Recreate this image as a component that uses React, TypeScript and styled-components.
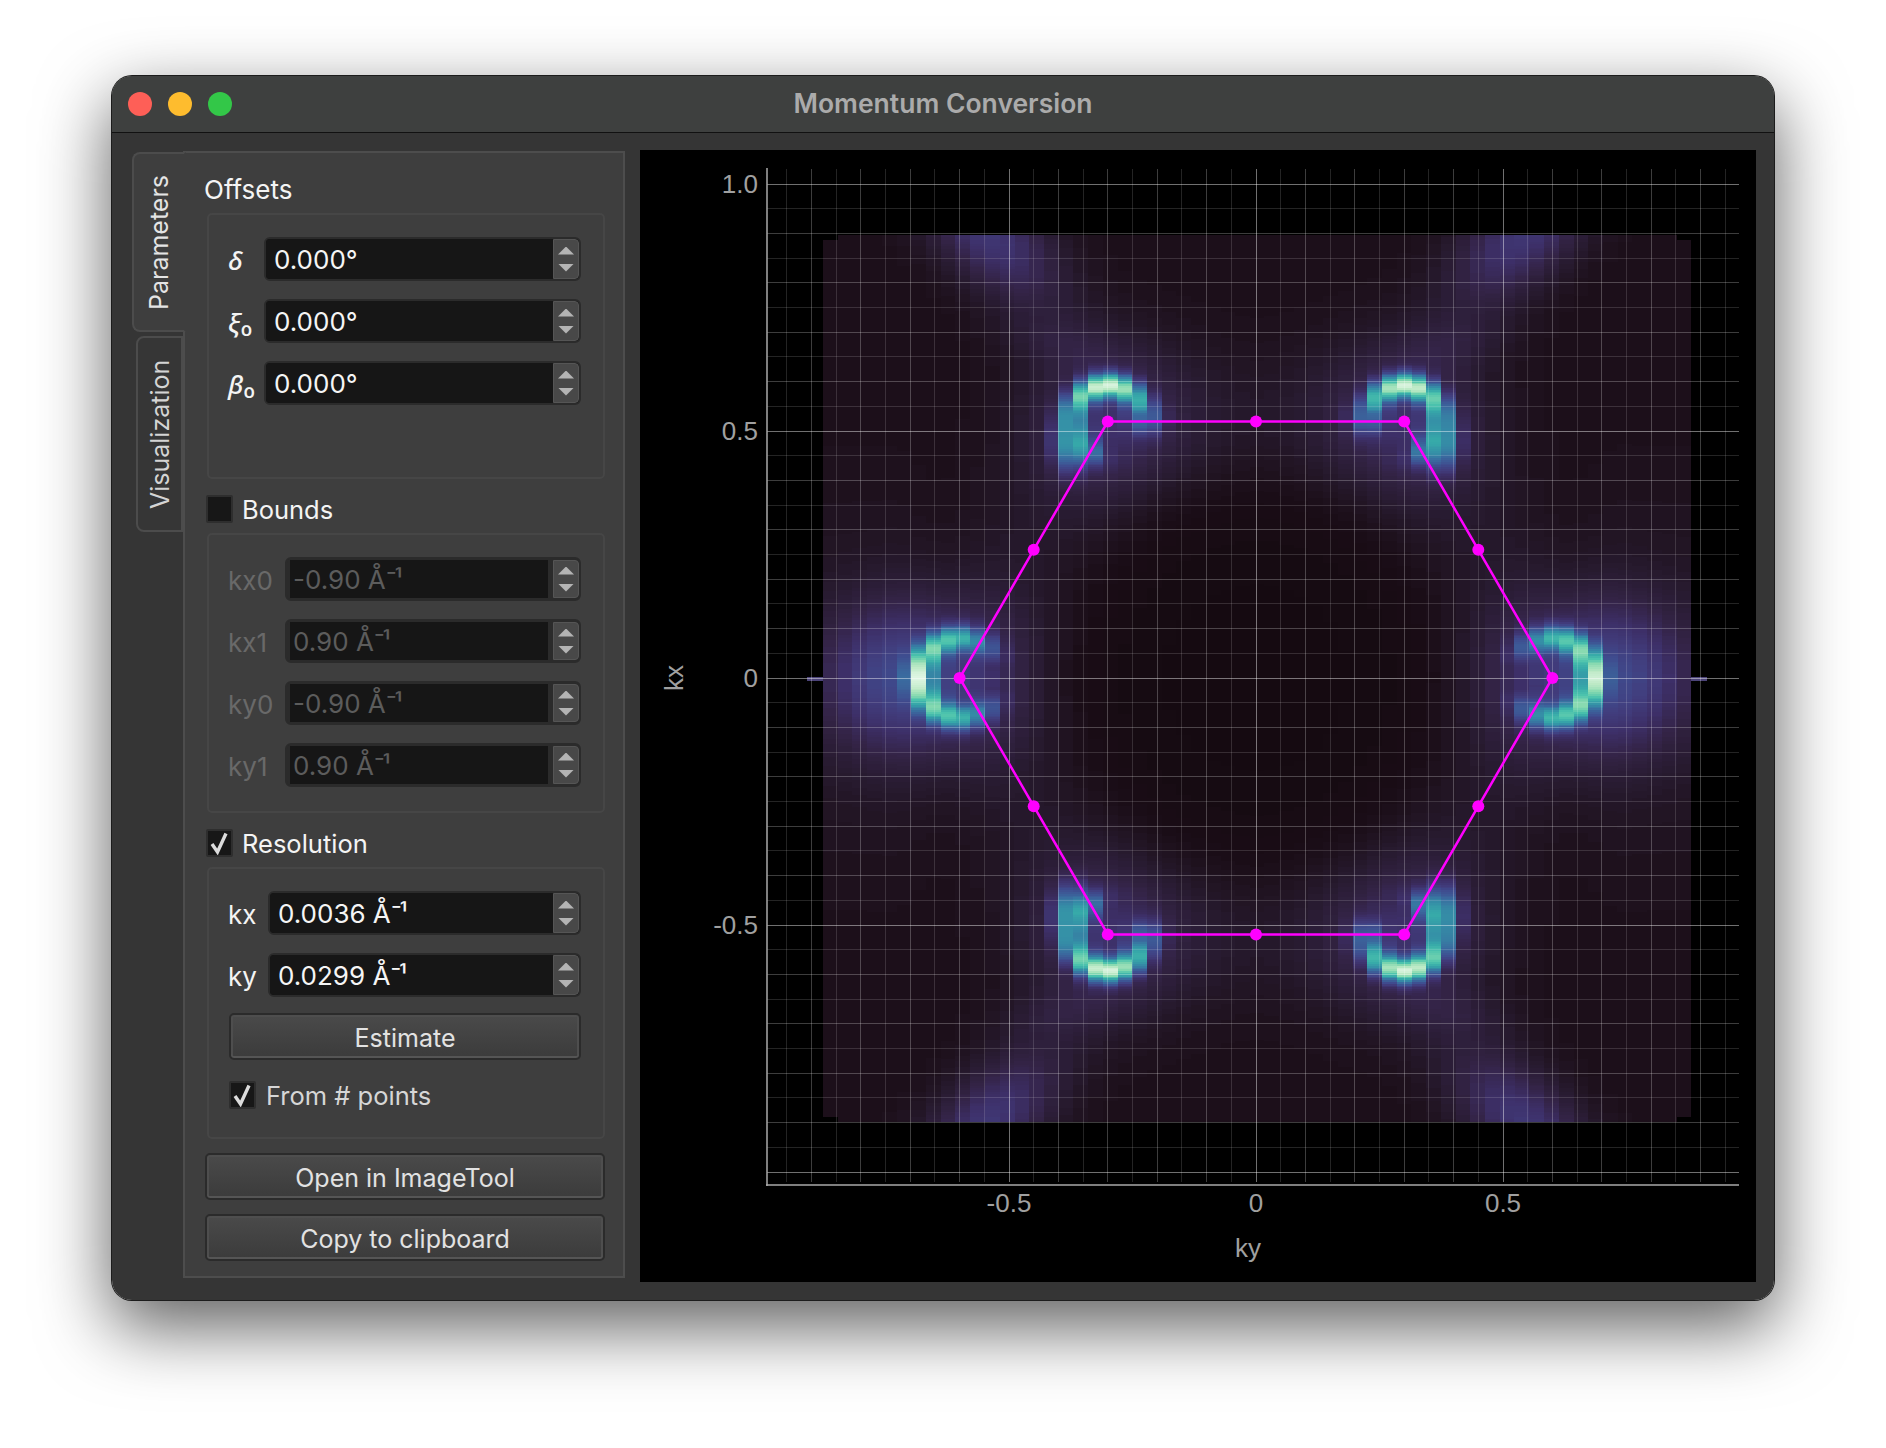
import { useMemo } from 'react';
import styled, { createGlobalStyle } from 'styled-components';

const PLOT_X = 640;
const PLOT_Y = 150;
const CX = 1256 - PLOT_X;
const CY = 678 - PLOT_Y;
const UNIT = 494;

const toX = (ky: number) => CX + ky * UNIT;
const toY = (kx: number) => CY - kx * UNIT;

const STOPS: [number, number[]][] = [
  [0, [11, 4, 5]],
  [0.04, [21, 10, 17]],
  [0.06, [26, 13, 22]],
  [0.1, [39, 26, 46]],
  [0.15, [52, 36, 72]],
  [0.2, [61, 47, 104]],
  [0.25, [65, 61, 125]],
  [0.3, [63, 75, 142]],
  [0.4, [58, 106, 159]],
  [0.5, [53, 138, 166]],
  [0.6, [54, 168, 169]],
  [0.7, [76, 195, 173]],
  [0.8, [134, 217, 176]],
  [0.9, [188, 233, 197]],
  [1, [228, 247, 232]],
];

const colorAt = (t: number) => {
  const v = Math.min(1, Math.max(0, t));
  for (let i = 1; i < STOPS.length; i++) {
    if (v <= STOPS[i][0]) {
      const [a, ca] = STOPS[i - 1];
      const [b, cb] = STOPS[i];
      const f = (v - a) / (b - a);
      const c = ca.map((n, k) => Math.round(n + (cb[k] - n) * f));
      return `rgb(${c[0]},${c[1]},${c[2]})`;
    }
  }
  return 'rgb(228,247,232)';
};

const SIDE_TABLE = [
  [-180, 0.1], [-150, 0.25], [-125, 0.45], [-90, 0.66], [-65, 0.74], [-40, 0.82], [-20, 0.92], [0, 1],
  [20, 0.92], [40, 0.82], [65, 0.74], [90, 0.66], [125, 0.45], [150, 0.25], [180, 0.1],
];
const TOP_TABLE = [
  [-180, 0.28], [-140, 0.14], [-90, 0.2], [-47, 0.6], [0, 0.62], [30, 0.72], [56, 0.85], [77, 0.98],
  [100, 0.96], [130, 0.76], [158, 0.55], [180, 0.28],
];

const lookup = (table: number[][], deg: number) => {
  for (let i = 1; i < table.length; i++) {
    if (deg <= table[i][0]) {
      const f = (deg - table[i - 1][0]) / (table[i][0] - table[i - 1][0]);
      return table[i - 1][1] + (table[i][1] - table[i - 1][1]) * f;
    }
  }
  return table[table.length - 1][1];
};

const gauss = (d: number, s: number) => Math.exp(-(d * d) / (s * s));
const smooth = (v: number, a: number, b: number) => {
  const f = Math.min(1, Math.max(0, (v - a) / (b - a)));
  return f * f * (3 - 2 * f);
};

const intensity = (kyRaw: number, kxRaw: number) => {
  const ky = Math.abs(kyRaw);
  const kx = Math.abs(kxRaw);
  const rad = Math.hypot(ky, kx);
  let bg = 0.04 + 0.026 * smooth(rad, 0.1, 0.7);

  const d = Math.max(kx, ky * 0.866 + kx * 0.5) - 0.52;
  bg += 0.03 * gauss(d, 0.14);

  const sr = Math.hypot(ky - 0.6, kx);
  const tr = Math.hypot(ky - 0.3, kx - 0.52);
  bg += 0.13 * gauss(sr, 0.15) + 0.11 * gauss(tr, 0.15);

  // haze going out from the side pockets
  bg += 0.13 * gauss(kx, 0.14) * gauss(ky - 0.76, 0.12);
  bg += 0.03 * gauss(kx, 0.32) * smooth(ky, 0.6, 0.75);

  // soft bands running from the upper pockets to the top and bottom edges
  const c = 0.4 + (kx - 0.67) * 0.62;
  bg += (0.05 + 0.11 * smooth(kx, 0.72, 0.9)) * gauss(ky - c, 0.11) * smooth(kx, 0.58, 0.7);

  const sa = (Math.atan2(kx, ky - 0.6) * 180) / Math.PI;
  const ta = (Math.atan2(kx - 0.52, ky - 0.3) * 180) / Math.PI;
  const sw = gauss(sr - 0.08, 0.024);
  const tw = gauss(tr - 0.072, 0.023);
  let t = bg;
  t += Math.max(0, lookup(SIDE_TABLE, sa) - t) * sw;
  t += Math.max(0, lookup(TOP_TABLE, ta) - t) * tw;

  // the arc's ends hang down as short streaks
  t += Math.max(0, 0.56 - t) * gauss(ky - 0.375, 0.03) * gauss(kx - 0.475, 0.05);
  t += Math.max(0, 0.4 - t) * gauss(ky - 0.225, 0.03) * gauss(kx - 0.525, 0.03);
  return t;
};

const COL_W = 14.71;
const ROW_H = 1.8;
const IMG_X = 823 - PLOT_X;
const IMG_Y = 235 - PLOT_Y;
const COLS = 59;
const ROWS = 493;
const LEVELS = 180;

const buildHeatmap = () => {
  const paths: string[][] = Array.from({ length: LEVELS + 1 }, () => []);
  for (let i = 0; i < COLS; i++) {
    const x = IMG_X + i * COL_W;
    const w = COL_W + 0.3;
    const ky = (x + COL_W / 2 - CX) / UNIT;
    const edgeCol = i === 0 || i === COLS - 1;
    let start = edgeCol ? 3 : 0;
    const end = edgeCol ? ROWS - 3 : ROWS;
    let level = -1;
    for (let j = start; j <= end; j++) {
      const y = IMG_Y + j * ROW_H;
      const kx = (CY - (y + ROW_H / 2)) / UNIT;
      const next = j === end ? -2 : Math.round(Math.min(1, intensity(ky, kx)) * LEVELS);
      if (next !== level) {
        if (level >= 0) {
          paths[level].push(`M${x.toFixed(1)} ${(IMG_Y + start * ROW_H).toFixed(1)}h${w.toFixed(1)}V${y.toFixed(1)}H${x.toFixed(1)}z`);
        }
        level = next;
        start = j;
      }
    }
  }
  return paths
    .map((p, i) => ({ d: p.join(''), fill: colorAt(i / LEVELS) }))
    .filter((p) => p.d);
};

const HEX: [number, number][] = [
  [0.6, 0],
  [0.3, 0.519],
  [-0.3, 0.519],
  [-0.6, 0],
  [-0.3, -0.519],
  [0.3, -0.519],
];

const Global = createGlobalStyle`
  html, body {
    margin: 0;
    background: #fff;
  }
  * {
    box-sizing: border-box;
  }
`;

const Page = styled.div`
  width: 1886px;
  height: 1448px;
  padding: 76px 0 0 112px;
  overflow: hidden;
  background: #fff;
  font-family: Inter, 'Noto Sans', sans-serif;
`;
const Window = styled.div`
  width: 1662px;
  height: 1224px;
  border-radius: 20px;
  background: #353535;
  overflow: hidden;
`;
const WindowShadow = styled.div`
  width: 1662px;
  height: 1224px;
  border-radius: 20px;
  box-shadow: 0 0 0 1px #1c1c1c, 0 26px 70px 2px rgba(0, 0, 0, 0.62);
`;
const TitleBar = styled.div`
  position: relative;
  height: 57px;
  background: #3e403f;
  border-bottom: 1px solid #111;
  display: flex;
  align-items: center;
  justify-content: center;
`;
const Lights = styled.div`
  position: absolute;
  left: 16px;
  top: 16px;
  display: flex;
  gap: 16px;
`;
const Light = styled.span<{ $color: string }>`
  width: 24px;
  height: 24px;
  border-radius: 50%;
  background: ${({ $color }) => $color};
`;
const Title = styled.div`
  font-size: 26.5px;
  font-weight: 600;
  color: #ababab;
  margin-top: -2px;
`;
const Body = styled.div`
  display: flex;
  align-items: flex-start;
  padding: 17px 0 0 20px;
`;
const Tabs = styled.div`
  width: 54px;
  margin-top: 2px;
  margin-right: -3px;
  position: relative;
  z-index: 1;
  display: flex;
  flex-direction: column;
  gap: 4px;
`;
const Tab = styled.div<{ $active?: boolean }>`
  writing-mode: vertical-rl;
  transform: rotate(180deg);
  display: flex;
  align-items: center;
  justify-content: center;
  font-size: 25px;
  color: ${({ $active }) => ($active ? '#e4e4e4' : '#d4d4d4')};
  background: ${({ $active }) => ($active ? '#3e3e3e' : '#363636')};
  border: 2px solid #4c4c4c;
  width: ${({ $active }) => ($active ? '54px' : '47px')};
  height: ${({ $active }) => ($active ? '180px' : '196px')};
  margin-left: ${({ $active }) => ($active ? '0' : '4px')};
  border-left-color: ${({ $active }) => ($active ? '#3e3e3e' : '#4c4c4c')};
  border-radius: 0 8px 8px 0;
`;
const Panel = styled.div`
  width: 442px;
  height: 1127px;
  margin-top: 1px;
  margin-right: 15px;
  background: #3e3e3e;
  border: 2px solid #4d4d4d;
  padding: 0 18px 0 20px;
  display: flex;
  flex-direction: column;
`;
const SectionTitle = styled.div`
  height: 60px;
  padding-top: 22px;
  margin-left: -1px;
  font-size: 26px;
  line-height: 30px;
  color: #f4f4f4;
`;
const CheckRow = styled.div`
  height: 54px;
  padding: 6px 0 0 1px;
  display: flex;
  align-items: center;
  gap: 9px;
  font-size: 25.5px;
  color: #f4f4f4;
`;
const SubCheckRow = styled(CheckRow)`
  height: 28px;
  padding: 0;
  margin-top: 3px;
  gap: 10px;
  color: #d6d6d6;
`;
const Box = styled.span`
  width: 27px;
  height: 28px;
  flex: none;
  background: #171717;
  border: 2px solid #2e2e2e;
  border-radius: 2px;
  display: block;
`;
const Group = styled.div<{ $height: number }>`
  height: ${({ $height }) => $height}px;
  margin-left: 2px;
  border: 2px solid #464646;
  border-radius: 5px;
  padding: 22px 22px 0 20px;
  display: flex;
  flex-direction: column;
  gap: 18px;
`;
const Row = styled.div`
  display: flex;
  align-items: center;
`;
const RowLabel = styled.div<{ $width: number; $disabled?: boolean }>`
  width: ${({ $width }) => $width}px;
  flex: none;
  font-size: 26px;
  margin-left: -1px;
  padding-top: 2px;
  white-space: nowrap;
  color: ${({ $disabled }) => ($disabled ? '#696969' : '#f4f4f4')};
`;
const Greek = styled.i`
  font-family: 'Noto Sans', sans-serif;
  font-weight: 500;
`;
const Spin = styled.div<{ $disabled?: boolean }>`
  flex: 1;
  margin-left: 1px;
  height: 44px;
  display: flex;
  background: ${({ $disabled }) => ($disabled ? '#2b2b2b' : '#161616')};
  border: 2px solid #2b2b2b;
  border-radius: 6px;
  padding-left: ${({ $disabled }) => ($disabled ? '3px' : '0')};
  padding-top: ${({ $disabled }) => ($disabled ? '1px' : '0')};
  padding-bottom: ${({ $disabled }) => ($disabled ? '1px' : '0')};
  overflow: hidden;
`;
const SpinValue = styled.div<{ $disabled?: boolean }>`
  flex: 1;
  background: #161616;
  color: ${({ $disabled }) => ($disabled ? '#5c5c5c' : '#f5f5f5')};
  font-size: 26px;
  line-height: ${({ $disabled }) => ($disabled ? '40px' : '42px')};
  padding-left: ${({ $disabled }) => ($disabled ? '3px' : '8px')};
  white-space: nowrap;
`;
const Power = styled.span`
  letter-spacing: -2.5px;
`;
const Stepper = styled.div<{ $disabled?: boolean }>`
  width: 26px;
  flex: none;
  margin-left: ${({ $disabled }) => ($disabled ? '5px' : '0')};
  background: #484848;
  border: 1px solid #555;
  border-radius: 0 4px 4px 0;
  display: flex;
  flex-direction: column;
  align-items: center;
  justify-content: center;
  gap: 9px;
`;
const Arrow = styled.span<{ $down?: boolean }>`
  width: 16px;
  height: 8px;
  background: #b4b4b4;
  clip-path: ${({ $down }) => ($down ? 'polygon(0 0, 100% 0, 50% 100%)' : 'polygon(50% 0, 100% 100%, 0 100%)')};
`;
const Button = styled.div`
  height: 47px;
  flex: none;
  display: flex;
  align-items: center;
  justify-content: center;
  padding-top: 2px;
  font-size: 25px;
  color: #e2e2e2;
  background: linear-gradient(#4a4a4a, #3b3b3b);
  border: 2px solid #2b2b2b;
  border-radius: 5px;
  box-shadow: inset 0 -2px 0 #555, inset 2px 0 0 #4e4e4e, inset -2px 0 0 #4e4e4e, inset 0 2px 0 #4e4e4e;
`;
const EstimateButton = styled(Button)`
  margin-top: -2px;
`;
const MainButton = styled(Button)`
  margin-top: 14px;
`;
const Plot = styled.div`
  width: 1116px;
  height: 1132px;
  background: #000;
`;
const PlotSvg = styled.svg`
  display: block;
`;
const TickText = styled.text`
  font-family: 'Liberation Sans', Arial, sans-serif;
  font-size: 26px;
  fill: #a0a0a0;
`;

const Check = () => (
  <svg width="23" height="24" viewBox="0 0 23 24" style={{ display: 'block' }}>
    <path d="M4 13 L9.5 21 L18 2.5" fill="none" stroke="#dcdcdc" strokeWidth="3.4" />
  </svg>
);

type SpinBoxProps = { label: React.ReactNode; value: string; labelWidth: number; disabled?: boolean; unit?: boolean };

const SpinBox = ({ label, value, labelWidth, disabled, unit }: SpinBoxProps) => (
  <Row>
    <RowLabel $width={labelWidth} $disabled={disabled}>
      {label}
    </RowLabel>
    <Spin $disabled={disabled}>
      <SpinValue $disabled={disabled}>
        {value}
        {unit && <Power>⁻¹</Power>}
      </SpinValue>
      <Stepper $disabled={disabled}>
        <Arrow />
        <Arrow $down />
      </Stepper>
    </Spin>
  </Row>
);

const gridLineColor = (n: number) => {
  if (n % 10 === 0) return 'rgba(255,255,255,0.44)';
  if (n % 2 === 0) return 'rgba(255,255,255,0.24)';
  return 'rgba(255,255,255,0.14)';
};

const MomentumPlot = () => {
  const heat = useMemo(buildHeatmap, []);
  const step = UNIT * 0.05;
  const vertical = Array.from({ length: 39 }, (_, i) => i - 19);
  const horizontal = Array.from({ length: 41 }, (_, i) => i - 20);
  const mids = HEX.map((p, i) => {
    const q = HEX[(i + 1) % HEX.length];
    return [(p[0] + q[0]) / 2, (p[1] + q[1]) / 2];
  });
  return (
    <Plot>
      <PlotSvg width={1116} height={1132} viewBox="0 0 1116 1132">
        <g shapeRendering="crispEdges">
          {heat.map((p) => (
            <path key={p.fill} d={p.d} fill={p.fill} />
          ))}
          <rect x={167} y={527} width={16} height={4} fill="#4b4378" />
          <rect x={1051} y={527} width={16} height={4} fill="#4b4378" />
          {vertical.map((n) => (
            <line key={n} x1={CX + n * step} x2={CX + n * step} y1={19} y2={1032} stroke={gridLineColor(n)} />
          ))}
          {horizontal.map((n) => (
            <line key={n} x1={127} x2={1099} y1={CY + n * step} y2={CY + n * step} stroke={gridLineColor(n)} />
          ))}
        </g>
        <line x1={127} x2={127} y1={18} y2={1036} stroke="#aaa" strokeWidth={1.5} />
        <line x1={126} x2={1099} y1={1035} y2={1035} stroke="#aaa" strokeWidth={1.5} />
        <polygon points={HEX.map((p) => `${toX(p[0])},${toY(p[1])}`).join(' ')} fill="none" stroke="#ff00ff" strokeWidth={2.5} />
        {[...HEX, ...mids].map((p) => (
          <circle key={`${p[0]}:${p[1]}`} cx={toX(p[0])} cy={toY(p[1])} r={6} fill="#ff00ff" />
        ))}
        <TickText x={118} y={43} textAnchor="end">1.0</TickText>
        <TickText x={118} y={290} textAnchor="end">0.5</TickText>
        <TickText x={118} y={537} textAnchor="end">0</TickText>
        <TickText x={118} y={784} textAnchor="end">-0.5</TickText>
        <TickText x={toX(-0.5)} y={1062} textAnchor="middle">-0.5</TickText>
        <TickText x={toX(0)} y={1062} textAnchor="middle">0</TickText>
        <TickText x={toX(0.5)} y={1062} textAnchor="middle">0.5</TickText>
        <TickText x={608} y={1107} textAnchor="middle">ky</TickText>
        <TickText x={43} y={528} textAnchor="middle" transform="rotate(-90 43 528)">kx</TickText>
      </PlotSvg>
    </Plot>
  );
};

const App = () => {
  return (
    <Page>
      <Global />
      <WindowShadow>
        <Window>
          <TitleBar>
            <Lights>
              <Light $color="#fe5f57" />
              <Light $color="#febc2e" />
              <Light $color="#33c748" />
            </Lights>
            <Title>Momentum Conversion</Title>
          </TitleBar>
          <Body>
            <Tabs>
              <Tab $active>Parameters</Tab>
              <Tab>Visualization</Tab>
            </Tabs>
            <Panel>
              <SectionTitle>Offsets</SectionTitle>
              <Group $height={266}>
                <SpinBox labelWidth={35} label={<Greek>δ</Greek>} value="0.000°" />
                <SpinBox labelWidth={35} label={<><Greek>ξ</Greek>₀</>} value="0.000°" />
                <SpinBox labelWidth={35} label={<><Greek>β</Greek>₀</>} value="0.000°" />
              </Group>
              <CheckRow>
                <Box />
                Bounds
              </CheckRow>
              <Group $height={280}>
                <SpinBox disabled unit labelWidth={56} label="kx0" value="-0.90 Å" />
                <SpinBox disabled unit labelWidth={56} label="kx1" value="0.90 Å" />
                <SpinBox disabled unit labelWidth={56} label="ky0" value="-0.90 Å" />
                <SpinBox disabled unit labelWidth={56} label="ky1" value="0.90 Å" />
              </Group>
              <CheckRow>
                <Box>
                  <Check />
                </Box>
                Resolution
              </CheckRow>
              <Group $height={272}>
                <SpinBox unit labelWidth={39} label="kx" value="0.0036 Å" />
                <SpinBox unit labelWidth={39} label="ky" value="0.0299 Å" />
                <EstimateButton>Estimate</EstimateButton>
                <SubCheckRow>
                  <Box>
                    <Check />
                  </Box>
                  From # points
                </SubCheckRow>
              </Group>
              <MainButton>Open in ImageTool</MainButton>
              <MainButton>Copy to clipboard</MainButton>
            </Panel>
            <MomentumPlot />
          </Body>
        </Window>
      </WindowShadow>
    </Page>
  );
};

export default App;
